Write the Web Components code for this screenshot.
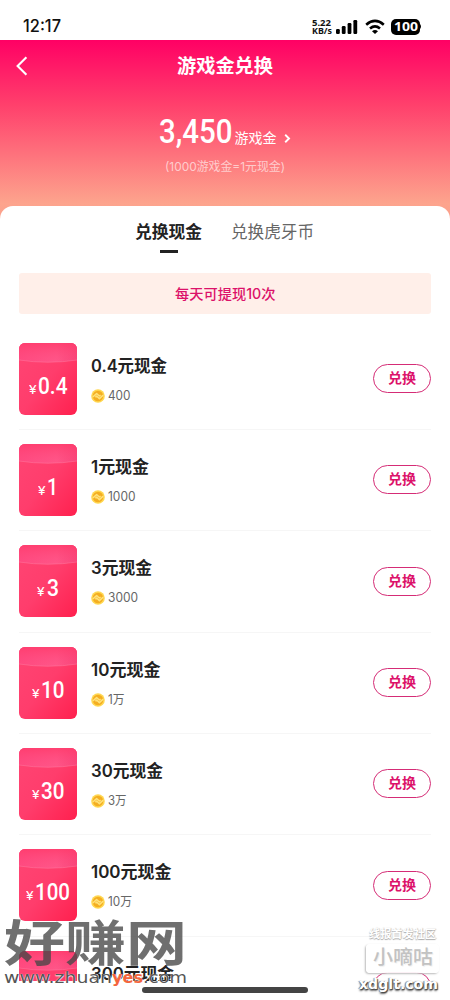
<!DOCTYPE html>
<html lang="zh-CN">
<head>
<meta charset="utf-8">
<title>游戏金兑换</title>
<style>
html,body{margin:0;padding:0;background:#fff}
body{width:450px;height:1000px;overflow:hidden;font-family:Inter,"Noto Sans CJK SC",sans-serif;color:#222}
</style>
</head>
<body>
<exchange-app></exchange-app>
<script>
const COINS = [
  ['0.4', '0.4元现金', 76, '400', 22.5],
  ['1', '1元现金', 58, '1000', 27.5],
  ['3', '3元现金', 61, '3000', 30],
  ['10', '10元现金', 69.5, '1万', 16.5],
  ['30', '30元现金', 72, '3万', 18.5],
  ['100', '100元现金', 80.5, '10万', 24],
  ['', '300元现金', 83, '', 0]
];
const define = (name, html, init) => customElements.define(name, class extends HTMLElement {
  connectedCallback() {
    if (this.shadowRoot) return;
    const root = this.attachShadow({mode: 'open'});
    root.innerHTML = html;
    if (init) init(this, root);
  }
});

/* One line of text, squeezed or stretched to the width given in "w". */
define('fit-text', `<style>
:host{display:inline-block;white-space:nowrap;flex:none}
span{display:inline-block;transform-origin:0 50%}
</style><span></span>`, (el, root) => {
  const s = root.querySelector('span');
  s.textContent = el.getAttribute('t');
  const w = +el.getAttribute('w');
  const natural = s.getBoundingClientRect().width;
  el.style.width = w + 'px';
  s.style.transform = `scaleX(${w / natural})`;
});

define('status-bar', `<style>
:host{display:flex;height:40px;box-sizing:border-box;padding:13px 28px 0 23px;justify-content:space-between;color:#111}
.time{font:500 17px/27px Inter,sans-serif}
.r{display:flex;height:27px;align-items:center}
.net{font:700 9px/8px "Noto Sans",sans-serif;display:grid;width:21px;margin-right:5px}
svg{display:block}
.bat{margin-left:6px;width:29px;height:16px;border-radius:5px;background:#000;color:#fff;font:700 12.5px/16px "Noto Sans",sans-serif;display:flex;justify-content:center}
</style>
<fit-text class="time" t="12:17" w="38"></fit-text>
<div class="r"><div class="net"><fit-text t="5.22" w="19"></fit-text><fit-text t="KB/s" w="20"></fit-text></div>
<svg style="margin-left:-3px" width="23" height="16" viewBox="0 0 23 16"><rect x="1" y="10" width="3.8" height="5" rx="1.2"/><rect x="6.8" y="7" width="3.8" height="8" rx="1.2"/><rect x="12.6" y="4" width="3.8" height="11" rx="1.2"/><rect x="18.4" y="1" width="3.8" height="14" rx="1.2"/></svg>
<svg style="margin-left:7px" width="20" height="16" viewBox="0 0 20 16" fill="none" stroke="#000" stroke-width="2.6"><path d="M1.2 5.7Q10-1.9 18.8 5.7M5 9.4Q10 5.2 15 9.4"/><path d="M10 15 7 12.2Q10 9.7 13 12.2Z" fill="#000" stroke="none"/></svg>
<div class="bat"><fit-text t="100" w="24"></fit-text></div><svg width="2" height="5"><path d="M0 0Q2 2.5 0 5" fill="#000"/></svg></div>`);

define('balance-header', `<style>
:host{display:flex;flex-direction:column;height:186px;background:linear-gradient(#ff0064 0,#ff406c 35%,#fda48d 88%,#f99e8b 100%);color:#fff}
nav{height:51px;display:grid;grid-template-columns:44px 1fr 44px;align-items:center}
nav svg{margin-left:15px}
.t{font-size:19px;font-weight:700;line-height:28px;justify-self:center;padding-top:2px}
.b{display:flex;align-items:baseline;margin:23px 0 0 159px;height:36px}
.n{font:500 33.5px/36px Roboto,sans-serif}
.u{font-size:14px;line-height:20px;margin-left:2px}
.b svg{margin-left:7px}
.s{margin:8px 0 0 165px;font-size:12px;line-height:18px;color:#ffffff9e}
</style>
<nav><svg width="13" height="20" viewBox="0 0 13 20" fill="none" stroke="#fff" stroke-width="2.1"><path d="M11.4 1.2 2.6 10 11.4 18.8"/></svg><fit-text class="t" t="游戏金兑换" w="96"></fit-text></nav>
<div class="b"><fit-text class="n" t="3,450" w="73.5"></fit-text><fit-text class="u" t="游戏金" w="42"></fit-text><svg width="7" height="9" viewBox="0 0 7 9" fill="none" stroke="#fff" stroke-width="1.9"><path d="M1.2.8 5 4.5 1.2 8.2"/></svg></div>
<fit-text class="s" t="(1000游戏金=1元现金)" w="120"></fit-text>`);

define('tab-strip', `<style>
:host{display:flex;justify-content:center;gap:29px;height:67px;box-sizing:border-box;padding:14px .5px 0 0}
div{display:flex;flex-direction:column;align-items:center}
.a{font-size:16.7px;font-weight:700;line-height:25px;color:#222}
.b{font-size:16.7px;line-height:25px;color:#666}
i{width:18px;height:3px;background:#222;margin-top:5px}
</style><div><fit-text class="a" t="兑换现金" w="67"></fit-text><i></i></div><fit-text class="b" t="兑换虎牙币" w="83"></fit-text>`);

define('notice-bar', `<style>
:host{display:flex;justify-content:center;align-items:center;height:41px;box-sizing:border-box;margin:0 19px;border-radius:3px;background:#ffefe9;color:#dc126a;font-size:14px;font-weight:500;line-height:20px}
</style><fit-text t="每天可提现10次" w="100.5"></fit-text>`);

define('red-packet', `<style>
:host{display:grid;flex:none;width:58px;height:72px;border-radius:6px;overflow:hidden;color:#fff}
svg,div{grid-area:1/1}
div{display:flex;justify-content:center;align-items:baseline;padding-top:29px;line-height:28px;gap:2px}
.y{font:400 13px/28px Roboto,sans-serif}
.n{font:500 24px/28px Roboto,sans-serif}
</style><svg width="58" height="72" viewBox="0 0 58 72"><defs><linearGradient id="g" x1="0" y1="0" x2="1" y2="1"><stop offset="0" stop-color="#ff4574"/><stop offset=".5" stop-color="#ff3d6c"/><stop offset="1" stop-color="#ff204e"/></linearGradient><linearGradient id="f" x1="0" y1="0" x2="1" y2="0"><stop offset="0" stop-color="#ff4a80"/><stop offset=".65" stop-color="#ff5688"/><stop offset="1" stop-color="#f84478"/></linearGradient><linearGradient id="h" x1="0" y1="0" x2="0" y2="1"><stop offset="0" stop-color="#ff3969" stop-opacity=".75"/><stop offset="1" stop-color="#ff4a80" stop-opacity="0"/></linearGradient></defs><rect width="58" height="72" fill="url(#g)"/><path d="M0 0H58V17Q29 21.5 0 17Z" fill="url(#f)"/><path d="M0 0H58V17Q29 21.5 0 17Z" fill="url(#h)"/><path d="M0 17Q29 21.5 58 17" fill="none" stroke="#ff80a6" stroke-opacity=".55" stroke-width=".8"/></svg>
<div></div>`, (el, root) => {
  const v = el.getAttribute('v');
  if (!v) return;
  const widths = {'0.4': 29.5, '1': 11, '3': 12, '10': 23.5, '30': 23.5, '100': 35};
  root.querySelector('div').innerHTML = `<fit-text class="y" t="¥" w="7.5"></fit-text><fit-text class="n" t="${v}" w="${widths[v]}"></fit-text>`;
});

define('coin-icon', `<style>:host{display:block;width:14px;height:14px;flex:none}svg{display:block}</style>
<svg width="14" height="14" viewBox="0 0 14 14"><circle cx="7" cy="7" r="6.8" fill="#ffd750"/><circle cx="7" cy="7" r="5.3" fill="#f4ae22"/><path d="M1.8 8 5.6 4.6 8.4 7 9.6 6M4.4 8.2 5.6 7 8.4 9.6 12.2 6.1" fill="none" stroke="#ffe27a" stroke-width="1.5" stroke-linejoin="round"/></svg>`);

define('pill-button', `<style>
:host{display:flex;align-items:center;justify-content:center;box-sizing:border-box;width:58px;height:29px;padding-bottom:1px;border:1px solid #d52c76;border-radius:15px;color:#dc126a;font-size:14px;font-weight:700;line-height:20px;flex:none}
</style><slot></slot>`);

define('cash-row', `<style>
:host{display:flex;height:101.35px;box-sizing:border-box;margin:0 19px;padding-top:14px;border-bottom:1px solid #f6f6f6}
.m{flex:1;margin-left:14.3px;padding-top:11px}
.t{font-size:16.7px;font-weight:600;line-height:24px;color:#222;display:block}
.c{display:flex;align-items:center;gap:3px;margin-top:9px;height:18px;font-size:12.5px;line-height:18px;color:#666}
pill-button{margin-top:21.5px}
</style><div class="row" style="display:contents"></div>`, (el, root) => {
  const [v, title, tw, cost, cw] = COINS[+el.getAttribute('i')];
  const price = cost ? `<div class="c"><coin-icon></coin-icon><fit-text t="${cost}" w="${cw}"></fit-text></div>` : '';
  root.querySelector('.row').innerHTML = `<red-packet v="${v}"></red-packet><div class="m"><fit-text class="t" t="${title}" w="${tw}"></fit-text>${price}</div><pill-button>${cost ? '兑换' : ''}</pill-button>`;
});

define('site-mark', `<style>
:host{position:absolute;left:4px;top:918px;width:184px;height:68px}
.a{display:block;font-size:49px;font-weight:700;line-height:52px;height:52px;color:rgba(70,70,70,.78)}
.u{display:flex;font:400 16px/18px "DejaVu Sans",sans-serif;color:#555;text-shadow:0 0 1px #fff,0 1px 1px #fff;margin-top:-1px;height:18px}
.o{color:#f4653d;font-weight:700}
</style><fit-text class="a" t="好赚网" w="183"></fit-text><div class="u"><fit-text t="www.zhuan" w="108"></fit-text><fit-text class="o" t="yes" w="31"></fit-text><fit-text t=".com" w="44"></fit-text></div>`);

define('forum-mark', `<style>
:host{position:absolute;left:359px;top:925px;width:82px;display:flex;flex-direction:column;align-items:flex-start}
.a{margin-left:10px;font-size:11px;font-weight:700;line-height:18px;color:#fff;text-shadow:0 1px 1px #aaa,1px 0 1px #ccc}
.b{margin:1px 0 0 7px;width:73px;height:29px;box-sizing:border-box;border-radius:4px;background:#ffffffed;box-shadow:-1px 1px 2px #bbb;display:flex;justify-content:center;font-size:19px;font-weight:500;line-height:28px;color:#c2c2c2;text-shadow:1px 1px 1px #eee}
.c{margin-top:1px;font:700 14.5px/20px "DejaVu Sans",sans-serif;color:#fff;text-shadow:1px 1px 1px #444,-1px 0 1px #777,0 2px 2px #666}
</style><fit-text class="a" t="线报首发社区" w="67"></fit-text><div class="b"><fit-text t="小嘀咕" w="60"></fit-text></div><fit-text class="c" t="xdglt.com" w="79"></fit-text>`);

define('exchange-app', `<style>
:host{display:block;position:relative;width:450px;height:1000px;overflow:hidden;background:#fff}
main{position:relative;margin-top:-20px;border-radius:13px 13px 0 0;background:#fff;height:775px;overflow:hidden}
.list{padding-top:14.6px}
.home{position:absolute;left:142px;top:987px;width:166px;height:6px;border-radius:3px;background:#444}
</style><status-bar></status-bar><balance-header></balance-header>
<main><tab-strip></tab-strip><notice-bar></notice-bar><div class="list">${COINS.map((_, i) => `<cash-row i="${i}"></cash-row>`).join('')}</div></main>
<site-mark></site-mark><forum-mark></forum-mark><div class="home"></div>`);
</script>
</body>
</html>
